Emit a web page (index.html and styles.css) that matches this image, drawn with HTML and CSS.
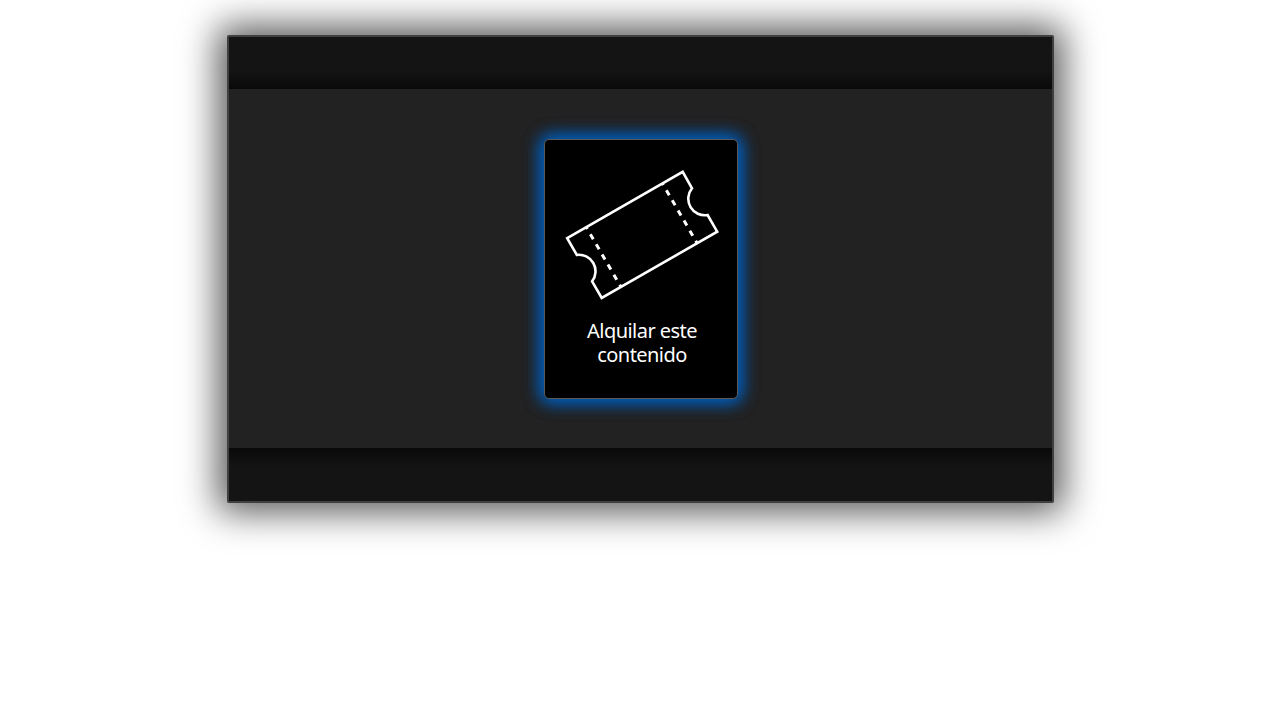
FILE: index.html
```html
<!DOCTYPE html>
<html lang="es">
<head>
<meta charset="utf-8">
<title>Alquilar</title>
<link rel="stylesheet" href="styles.css">
</head>
<body>
<main class="dialog">
  <header class="bar bar-top"></header>
  <section class="content">
    <button class="card" type="button">
      <svg class="ticket" viewBox="545 140 192 170" fill="none" stroke="#fff" stroke-width="2.6">
        <path d="M567.2 238.2 682.7 171.800 692 188.300A16.500 16.500 0 0 0 707.600 215L717.200 231.700 601.700 298 592.100 281.300A16.500 16.500 0 0 0 576.800 254.900Z"/>
        <path stroke-width="3" d="M586.500 227.500 621 287M662.500 183.500 697 243" stroke-dasharray="5.800 5.900" stroke-dashoffset="4"/>
      </svg>
      <span class="label">Alquilar este contenido</span>
    </button>
  </section>
  <footer class="bar bar-bottom"></footer>
</main>
</body>
</html>
```
FILE: styles.css
```css
body {
  box-sizing: border-box;
  min-height: 100vh;
  margin: 0;
  padding-top: 35px;
  background: #fff;
  font-family: "Noto Sans", "Open Sans", sans-serif;
}
.dialog {
  box-sizing: border-box;
  display: flex;
  flex-direction: column;
  width: 827px;
  height: 468px;
  margin-left: 227px;
  border: 2px solid #404040;
  border-radius: 2px;
  background: #222;
  box-shadow: 0 0 36px 9px rgba(0, 0, 0, 0.66);
}
.bar {
  background: #141414;
}
.bar-top {
  height: 52px;
  background: linear-gradient(#141414 65%, #0a0a0a 98%);
}
.bar-bottom {
  height: 53px;
  background: linear-gradient(#0a0a0a 2%, #141414 35%);
}
.content {
  display: flex;
  flex: 1;
  align-items: flex-start;
  justify-content: center;
  padding: 50px 0 0 1px;
}
.card {
  box-sizing: border-box;
  display: flex;
  flex-direction: column;
  align-items: center;
  width: 194px;
  height: 260px;
  padding: 0;
  border: 1px solid #5a5a5a;
  border-radius: 5px;
  background: #000;
  color: #fff;
  font: inherit;
  box-shadow: 0 0 17px 2px #005bb5, 0 0 17px 2px #005bb5;
}
.ticket {
  width: 192px;
  height: 170px;
}
.label {
  width: 130px;
  margin: 9px 0 0 2px;
  font-size: 20px;
  line-height: 24px;
  letter-spacing: -0.55px;
}
```
